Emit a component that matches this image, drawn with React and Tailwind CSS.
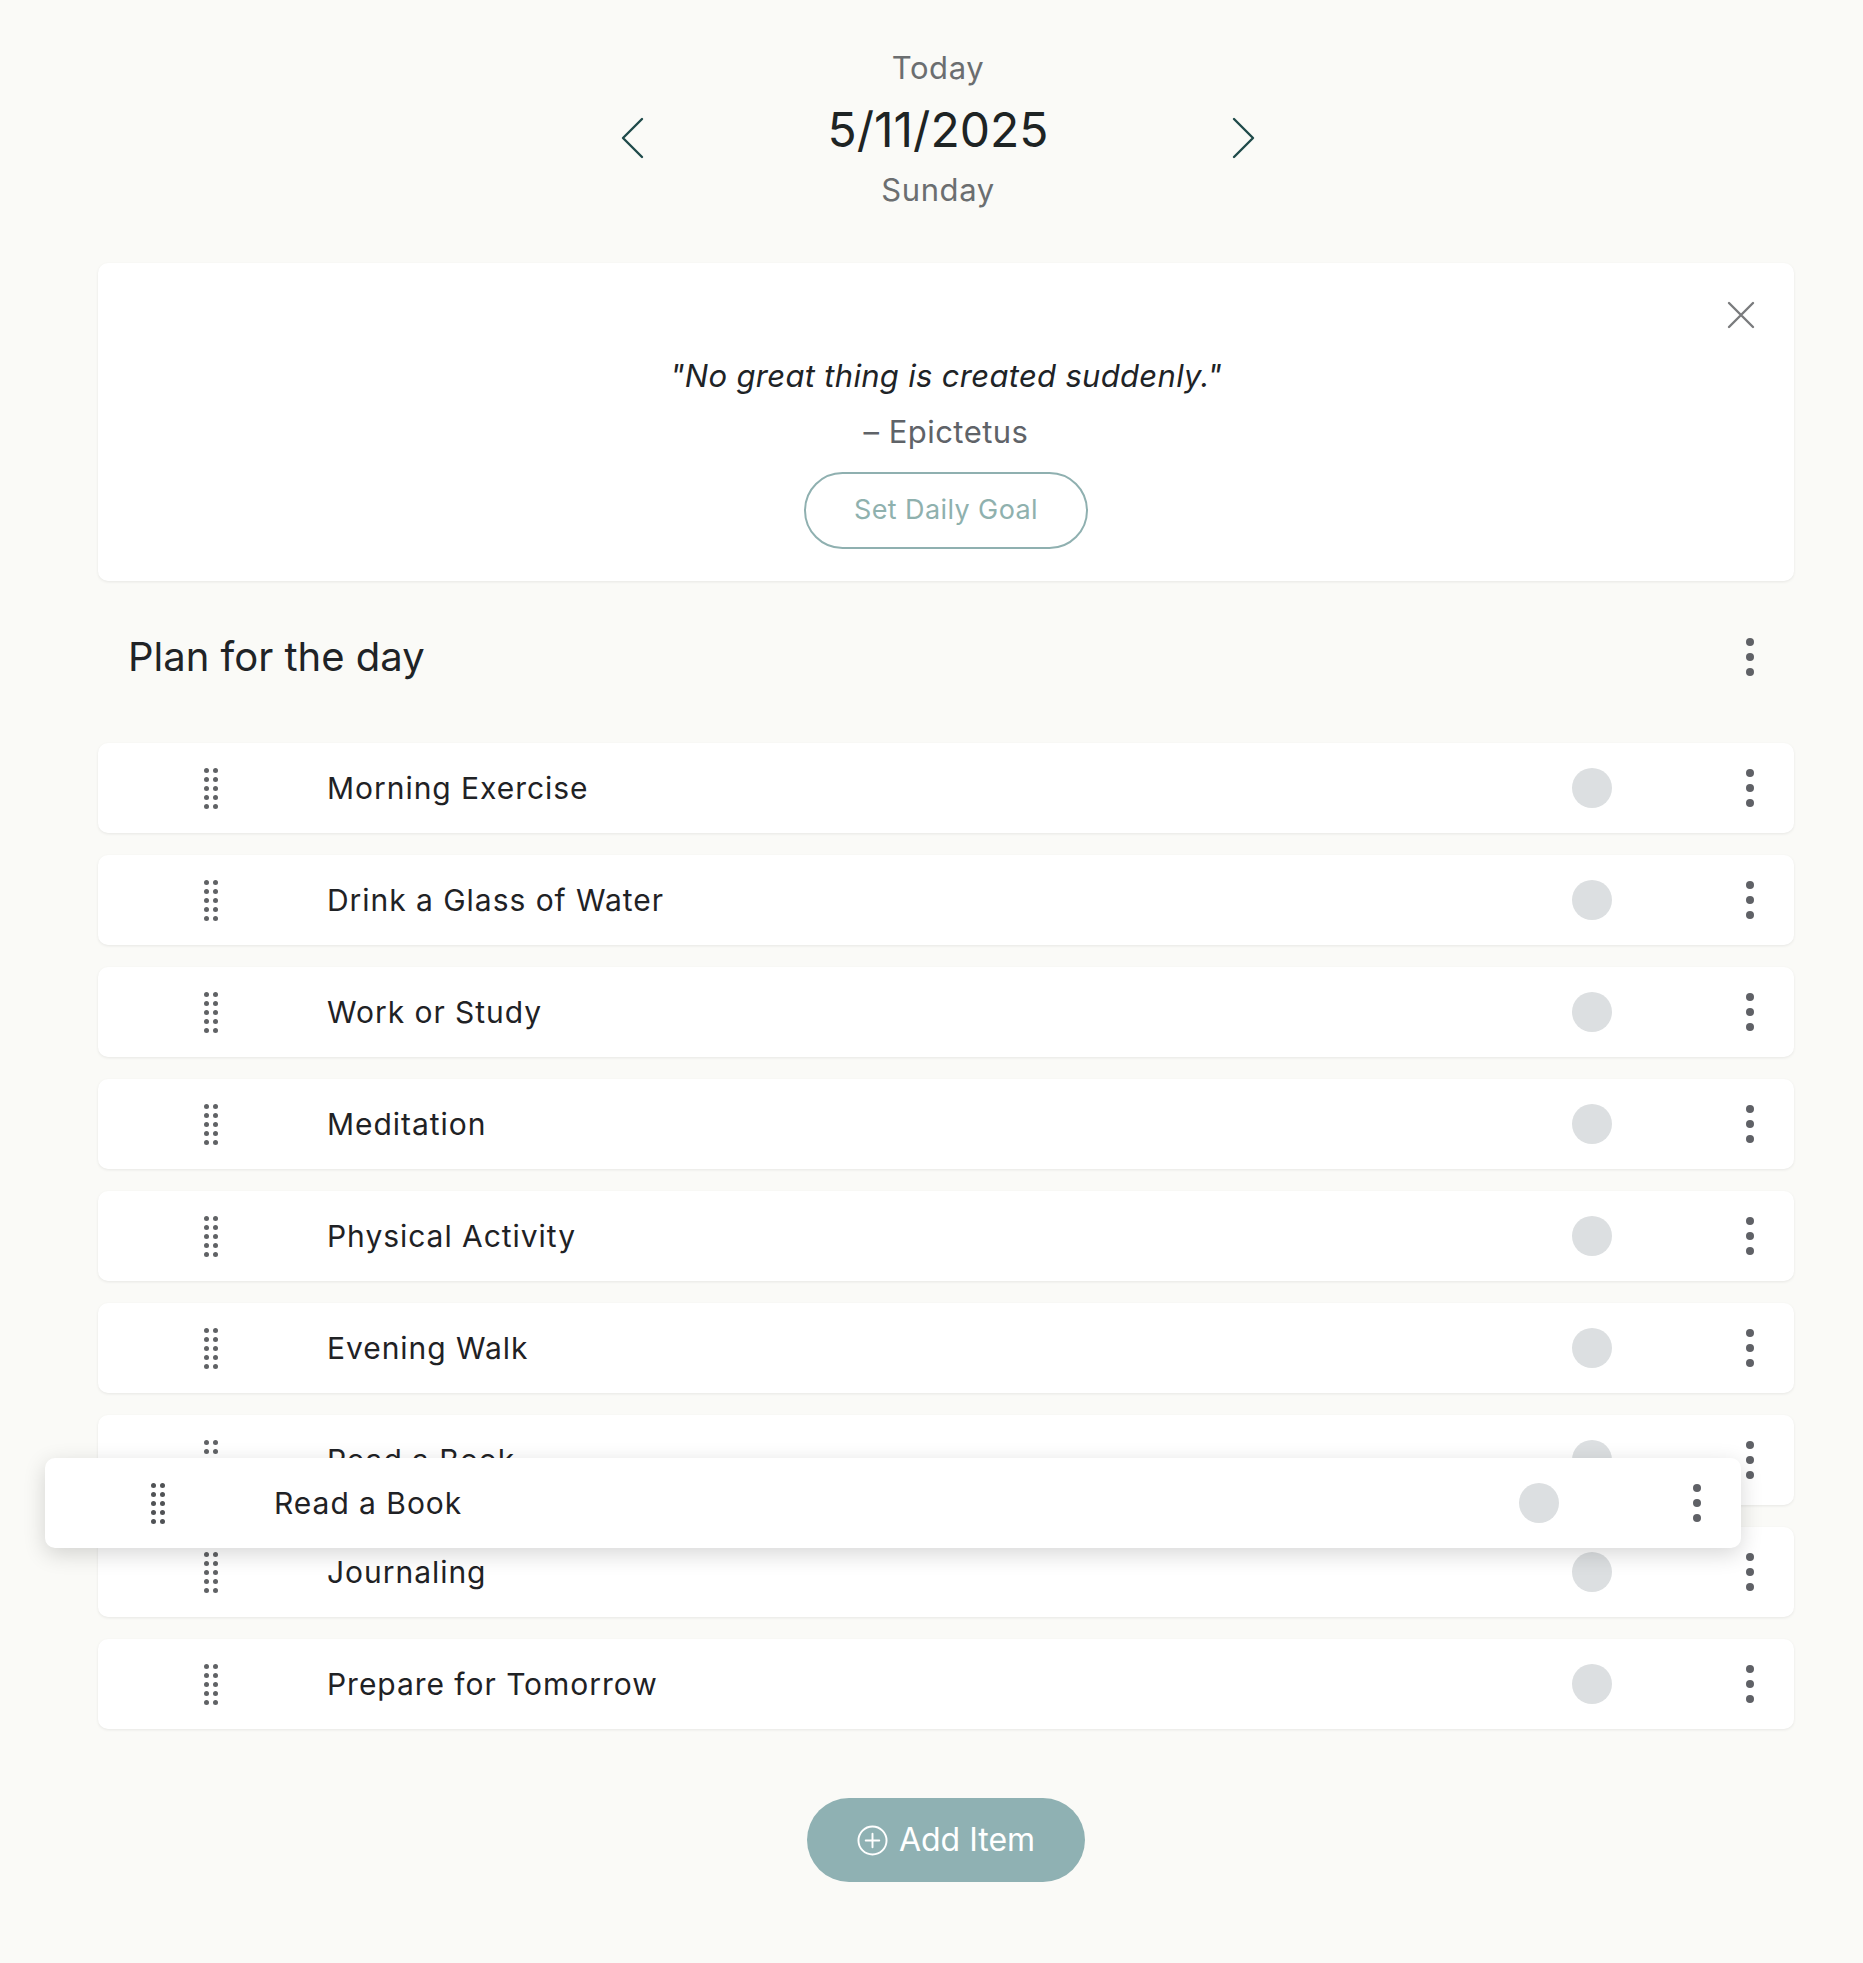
import { useState } from "react";

const tasks = [
  "Morning Exercise",
  "Drink a Glass of Water",
  "Work or Study",
  "Meditation",
  "Physical Activity",
  "Evening Walk",
  "Read a Book",
  "Journaling",
  "Prepare for Tomorrow",
];

const Kebab = ({ className = "" }) => (
  <div className={`flex flex-col items-center gap-[7px] ${className}`}>
    <span className="w-[8px] h-[8px] rounded-full bg-[#5f6166]" />
    <span className="w-[8px] h-[8px] rounded-full bg-[#5f6166]" />
    <span className="w-[8px] h-[8px] rounded-full bg-[#5f6166]" />
  </div>
);

const Grip = ({ color = "bg-[#606265]" }) => (
  <div className="grid grid-cols-2 gap-x-[4px] gap-y-[4px] w-[14px]">
    {Array.from({ length: 10 }).map((_, i) => (
      <span key={i} className={`w-[5px] h-[5px] rounded-full ${color}`} />
    ))}
  </div>
);

const TaskRow = ({ title, dragging = false }) => (
  <div
    className={`h-[90px] flex items-center bg-white rounded-[10px] ${
      dragging
        ? "shadow-[0_6px_22px_rgba(0,0,0,0.16)]"
        : "shadow-[0_1px_3px_rgba(0,0,0,0.08)]"
    }`}
  >
    <div className="ml-[106px]">
      <Grip color={dragging ? "bg-[#505255]" : "bg-[#606265]"} />
    </div>
    <div className="ml-[109px] flex-1 text-[30px] leading-[36px] tracking-[0.032em] text-[#1f2225]">
      {title}
    </div>
    <span className="w-[40px] h-[40px] rounded-full bg-[#dcdfe1]" />
    <Kebab className="ml-[134px] mr-[40px]" />
  </div>
);

const Chevron = ({ dir }) => (
  <svg width="26" height="44" viewBox="0 0 26 44" fill="none" className="mt-[17px]">
    <path
      d={dir === "left" ? "M23 3 L4 22 L23 41" : "M3 3 L22 22 L3 41"}
      stroke="#1f4a4a"
      strokeWidth="2.4"
      strokeLinecap="round"
      strokeLinejoin="round"
    />
  </svg>
);

export default function App() {
  const [showQuote, setShowQuote] = useState(true);

  return (
    <div className="min-h-screen bg-[#fafaf7] font-['Inter',sans-serif]">
      {/* Date header */}
      <div className="pt-[50px] pl-[13px] flex justify-center">
        <div className="flex flex-col items-center">
          <div className="text-[31px] leading-[36px] tracking-[0.02em] text-[#6b6e70]">Today</div>
          <div className="mt-[13px] flex items-center">
            <div className="w-[40px] flex justify-center">
              <Chevron dir="left" />
            </div>
            <div className="w-[572px] text-center text-[48px] leading-[60px] text-[#1e2424]">
              5/11/2025
            </div>
            <div className="w-[40px] flex justify-center">
              <Chevron dir="right" />
            </div>
          </div>
          <div className="mt-[12px] text-[31px] leading-[36px] tracking-[0.02em] text-[#6b6e70]">Sunday</div>
        </div>
      </div>

      <div className="pl-[98px] pr-[69px]">
        {/* Quote card */}
        {showQuote && (
          <div className="relative mt-[55px] bg-white rounded-[10px] shadow-[0_1px_3px_rgba(0,0,0,0.08)] pt-[95px] pb-[32px] flex flex-col items-center">
            <button
              className="absolute right-[39px] top-[38px]"
              onClick={() => setShowQuote(false)}
              aria-label="Close"
            >
              <svg width="28" height="28" viewBox="0 0 28 28">
                <path d="M2 2 L26 26 M26 2 L2 26" stroke="#7a7b7d" strokeWidth="2.4" strokeLinecap="round" />
              </svg>
            </button>
            <div className="text-[31px] leading-[36px] tracking-[0.01em] italic text-[#202326]">
              "No great thing is created suddenly."
            </div>
            <div className="mt-[20px] text-[31px] leading-[36px] tracking-[0.015em] text-[#5f6368]">– Epictetus</div>
            <button className="mt-[22px] h-[77px] w-[284px] rounded-full border-2 border-[#8fb0b0] text-[27px] tracking-[0.015em] text-[#8fb1ae]">
              Set Daily Goal
            </button>
          </div>
        )}

        {/* Plan header */}
        <div className="mt-[52px] pl-[30px] pr-[40px] flex items-center justify-between">
          <h2 className="text-[40px] leading-[48px] text-[#202326]">Plan for the day</h2>
          <Kebab />
        </div>

        {/* Task list */}
        <div className="relative mt-[62px] flex flex-col gap-[22px]">
          {tasks.map((t) => (
            <TaskRow key={t} title={t} />
          ))}
          <div className="absolute left-[-53px] top-[715px] w-full">
            <TaskRow title="Read a Book" dragging />
          </div>
        </div>

        {/* Add item */}
        <div className="mt-[69px] pb-[81px] flex justify-center">
          <button className="h-[84px] w-[278px] rounded-full bg-[#8fb1b3] flex items-center justify-center gap-[11px] text-white text-[32px]">
            <svg width="31" height="31" viewBox="0 0 32 32" fill="none">
              <circle cx="16" cy="16" r="14.5" stroke="white" strokeWidth="2" />
              <path d="M16 9 V23 M9 16 H23" stroke="white" strokeWidth="2" strokeLinecap="round" />
            </svg>
            Add Item
          </button>
        </div>
      </div>
    </div>
  );
}
